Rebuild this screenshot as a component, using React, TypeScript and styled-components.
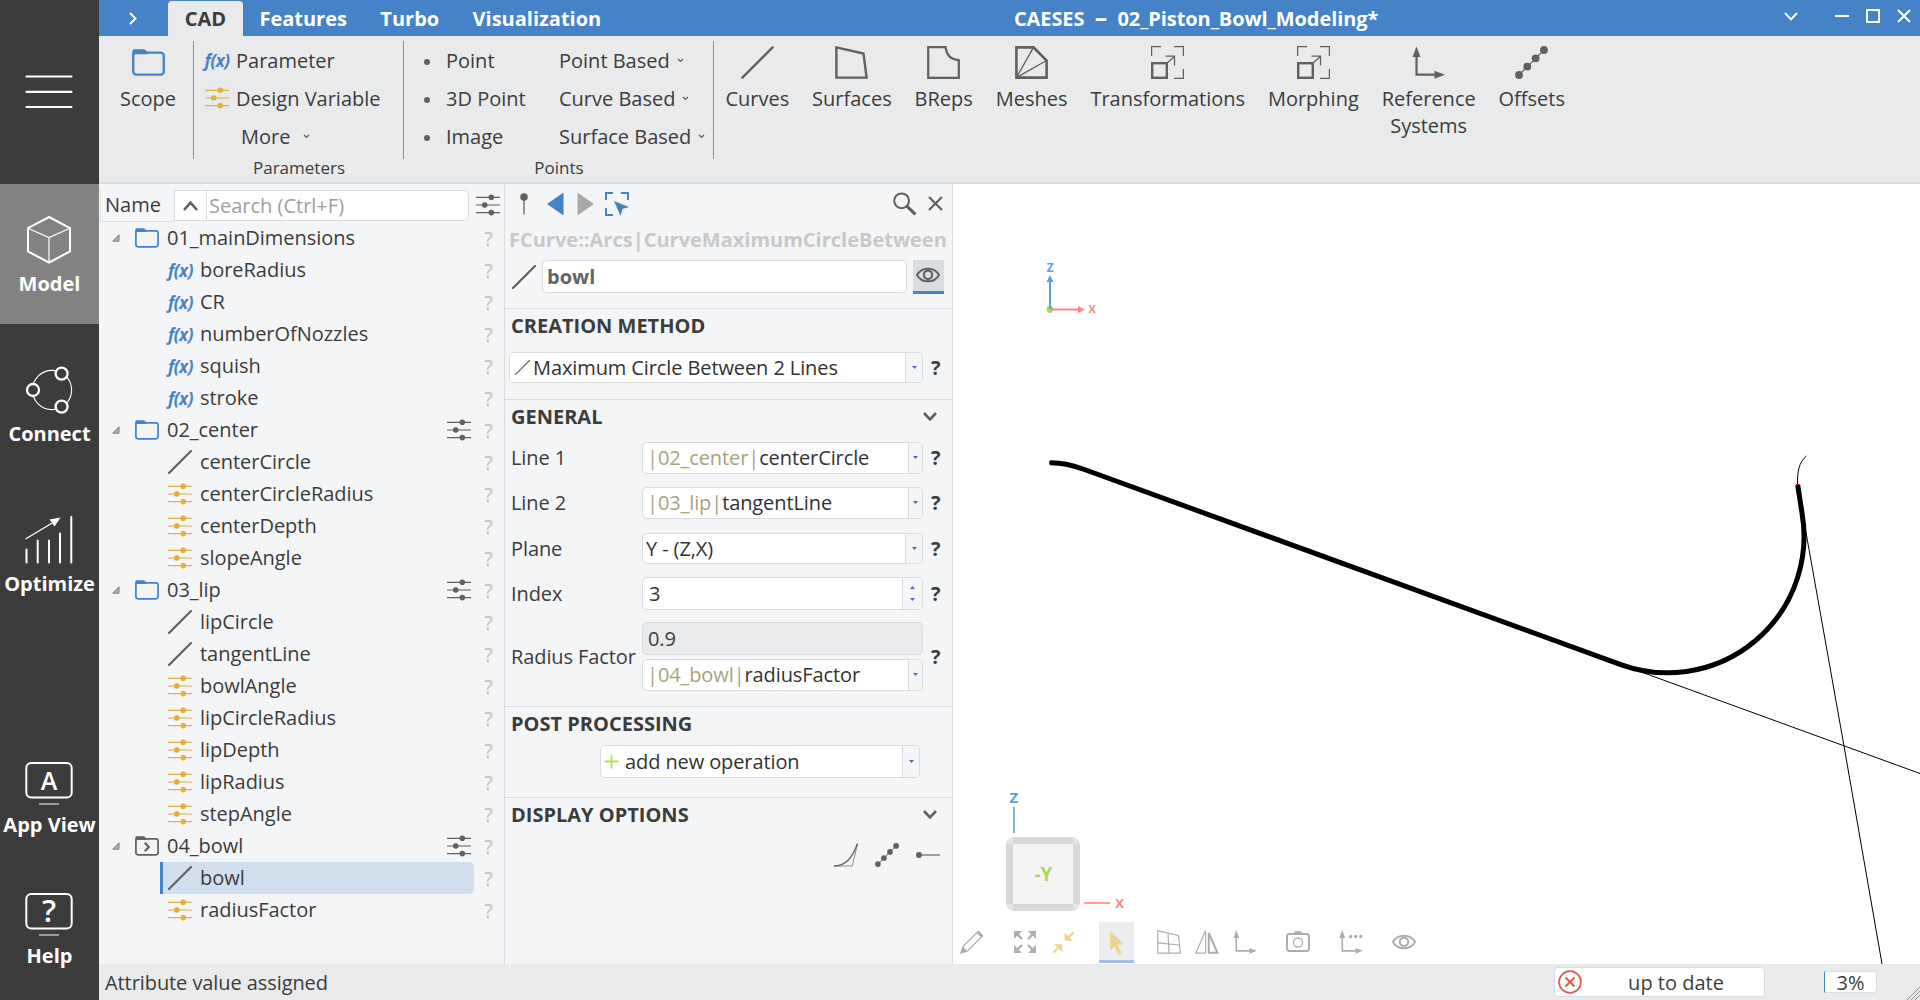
import React from "react";
import styled, { createGlobalStyle } from "styled-components";

const GlobalStyle = createGlobalStyle`
  * {
    box-sizing: border-box;
  }
  body {
    margin: 0;
    overflow: hidden;
    font-family: "Open Sans", "Noto Sans", sans-serif;
    font-size: 20px;
    line-height: 27px;
    color: #3c3c3c;
  }
  svg {
    display: block;
    flex-shrink: 0;
  }
  button {
    border: 0;
    padding: 0;
    background: none;
    font: inherit;
    color: inherit;
  }
`;

const Window = styled.div`
  display: flex;
  width: 1920px;
  height: 1000px;
  white-space: nowrap;
`;
const Main = styled.div`
  flex: 1;
  min-width: 0;
  display: flex;
  flex-direction: column;
`;

/* ---------- sidebar ---------- */

const Sidebar = styled.nav`
  width: 99px;
  background: #3c3c3c;
  color: #fff;
  display: flex;
  flex-direction: column;
  svg {
    margin-right: 1px;
  }
`;
const MenuButton = styled.button`
  height: 184px;
  display: flex;
  justify-content: center;
  align-items: center;
`;
interface SideItemProps {
  $active?: boolean;
  $height?: string;
}
const SideItem = styled.button<SideItemProps>`
  height: ${(props) => props.$height || "140px"};
  margin-bottom: ${(props) => (props.$height ? "0" : "10px")};
  padding-top: 32px;
  display: flex;
  flex-direction: column;
  align-items: center;
  gap: 6px;
  font-weight: 700;
  background: ${(props) => (props.$active ? "#828282" : "transparent")};
`;
const SideBottom = styled.div`
  margin-top: auto;
  padding-bottom: 13px;
  display: flex;
  flex-direction: column;
`;

/* ---------- title bar ---------- */

const TitleBar = styled.header`
  height: 36px;
  background: #4682c8;
  color: #fff;
  font-weight: 700;
  display: flex;
  align-items: flex-end;
`;
const Expand = styled.button`
  width: 69px;
  height: 36px;
  padding-right: 1px;
  display: flex;
  justify-content: center;
  align-items: center;
`;
const Tab = styled.button<{ $active?: boolean }>`
  height: 35px;
  padding: 0 16.7px;
  font-weight: 700;
  border-radius: 4px 4px 0 0;
  color: ${(props) => (props.$active ? "#3c3c3c" : "#fff")};
  background: ${(props) => (props.$active ? "#e9eaeb" : "transparent")};
`;
const Caption = styled.div`
  flex: 1;
  padding: 0 0 4px 396px;
  letter-spacing: -0.07px;
  white-space: pre;
`;
const Dash = styled.span`
  font-size: 25px;
  line-height: 0;
`;
const WindowButtons = styled.div`
  height: 36px;
  padding: 0 9px 4px 0;
  display: flex;
  align-items: center;
  gap: 17px;
  svg:first-child {
    margin-right: 20px;
  }
`;

/* ---------- ribbon ---------- */

const Ribbon = styled.div`
  height: 148px;
  background: #e9eaeb;
  border-bottom: 2px solid #dadde0;
  padding-top: 5px;
  display: flex;
`;
const RibbonGroup = styled.section<{ $width: string }>`
  width: ${(props) => props.$width};
  display: flex;
  flex-direction: column;
`;
const GroupBody = styled.div`
  height: 118px;
  border-right: 1px solid #909193;
  display: flex;
`;
const GroupLabel = styled.div`
  font-size: 17px;
  line-height: 17px;
  text-align: center;
`;
const CommandColumn = styled.div<{ $width?: string; $pad?: string }>`
  width: ${(props) => props.$width || "auto"};
  padding-left: ${(props) => props.$pad || "0"};
  display: flex;
  flex-direction: column;
`;
const Command = styled.button<{ $gap?: string; $indent?: string }>`
  height: 38px;
  padding-left: ${(props) => props.$indent || "0"};
  display: flex;
  align-items: center;
  gap: ${(props) => props.$gap || "7px"};
`;
const BigCommand = styled.button`
  padding: 5px 11.45px 0;
  display: flex;
  flex-direction: column;
  align-items: center;
  text-align: center;
  svg {
    margin-bottom: 6px;
  }
`;
const BigCommands = styled.div`
  display: flex;
  align-items: flex-start;
`;
const ScopeGroup = styled.div`
  width: 95px;
  height: 118px;
  border-right: 1px solid #909193;
  display: flex;
  justify-content: center;
  align-items: flex-start;
  padding-left: 4px;
  svg {
    margin-left: 1px;
  }
`;
const Dot = styled.span`
  width: 6px;
  height: 6px;
  margin-top: 4px;
  border-radius: 50%;
  background: #5f6061;
`;
const Fx = styled.span<{ $width?: string }>`
  width: ${(props) => props.$width || "26px"};
  color: #4682c8;
  font-size: 17px;
  font-style: italic;
  font-weight: 700;
  letter-spacing: -0.5px;
`;

/* ---------- object tree ---------- */

const Body = styled.div`
  height: 780px;
  display: flex;
`;
const TreePanel = styled.aside`
  width: 406px;
  background: #f4f5f7;
  border-right: 1px solid #d9dbde;
`;
const TreeHeader = styled.div`
  height: 38px;
  padding: 4px 4px 0 1px;
  display: flex;
`;
const HeaderCell = styled.div`
  width: 74px;
  height: 34px;
  padding: 3px 0 0 4px;
  border-left: 1px solid #dfe1e4;
  border-bottom: 1px solid #dfe1e4;
`;
const SearchUp = styled.button`
  width: 32px;
  height: 31px;
  margin-top: 2px;
  background: #fff;
  border: 1px solid #d9dbde;
  border-right: 0;
  display: flex;
  justify-content: center;
  align-items: center;
`;
const SearchInput = styled.input`
  width: 263px;
  height: 31px;
  margin-top: 2px;
  padding: 0 2px;
  border: 1px solid #d9dbde;
  border-radius: 0 5px 5px 0;
  font: inherit;
  &::placeholder {
    color: #a0a0a0;
    opacity: 1;
  }
`;
const HeaderSliders = styled.div`
  padding: 5px 0 0 7px;
`;
const TreeRow = styled.div`
  height: 32px;
  display: flex;
  align-items: center;
`;
const Twisty = styled.span`
  width: 36px;
  padding-left: 13px;
`;
interface NodeProps {
  $child?: boolean;
  $selected?: boolean;
}
const TreeNode = styled.div<NodeProps>`
  width: ${(props) => (props.$child ? "314px" : "312px")};
  height: 32px;
  margin-left: ${(props) => (props.$child ? "61px" : "0")};
  padding-left: ${(props) => (props.$child ? "5px" : "0")};
  border-left: ${(props) => (props.$child ? "3px solid transparent" : "0")};
  border-left-color: ${(props) => (props.$selected ? "#4682c8" : "transparent")};
  background: ${(props) => (props.$selected ? "#d1deee" : "transparent")};
  border-radius: 0 5px 5px 0;
  display: flex;
  align-items: center;
  gap: 8px;
`;
const NodeText = styled.span`
  padding-bottom: 1px;
  letter-spacing: -0.03px;
`;
const RowSliders = styled.span`
  width: 24px;
  margin-left: auto;
  margin-right: 13px;
`;
const RowHelp = styled.span<{ $tight?: boolean }>`
  margin-left: ${(props) => (props.$tight ? "0" : "auto")};
  margin-right: 11px;
  color: #c0c0c0;
`;

/* ---------- object editor ---------- */

const Editor = styled.section`
  width: 448px;
  background: #f4f5f7;
  border-right: 1px solid #d9dbde;
`;
const EditorTools = styled.div`
  height: 39px;
  padding: 0 9px 0 15px;
  display: flex;
  align-items: center;
`;
const ToolSlot = styled.span<{ $left?: string }>`
  margin-left: ${(props) => props.$left || "0"};
`;
const TypeName = styled.div`
  height: 36px;
  padding: 3px 0 0 4px;
  font-weight: 700;
  color: #c8c8c8;
  overflow: hidden;
`;
const NameRow = styled.div`
  height: 49px;
  padding: 1px 8px 0 7px;
  display: flex;
  align-items: flex-start;
  > svg {
    margin-top: 5px;
  }
`;
const NameInput = styled.input`
  width: 365px;
  height: 33px;
  margin: 0 6px;
  padding: 0 4px 1px;
  border: 1px solid #d9dbde;
  border-radius: 5px;
  font: inherit;
  font-weight: 700;
  color: #646464;
`;
const EyeButton = styled.button`
  width: 31px;
  height: 34px;
  padding: 0 1px 1px 0;
  background: #dadde0;
  border-bottom: 3px solid #4682c8;
  display: flex;
  justify-content: center;
  align-items: center;
`;
const Section = styled.section<{ $height?: string }>`
  height: ${(props) => props.$height || "auto"};
  border-top: 1px solid #d9dbde;
  padding: 3px 0 0 6px;
`;
const SectionTitle = styled.h2`
  height: 27px;
  margin: 0;
  padding-right: 15px;
  font-size: 20px;
  font-weight: 700;
  display: flex;
  align-items: center;
  justify-content: space-between;
`;
interface FieldProps {
  $height: string;
  $top?: string;
  $left?: string;
}
const Field = styled.div<FieldProps>`
  height: ${(props) => props.$height};
  margin-top: ${(props) => props.$top || "0"};
  margin-left: ${(props) => props.$left || "0"};
  display: flex;
  align-items: center;
  letter-spacing: -0.1px;
`;
const FieldLabel = styled.label`
  width: 131px;
`;
interface ComboProps {
  $width?: string;
  $height?: string;
  $pad?: string;
  $gap?: string;
}
const ComboBox = styled.div<ComboProps>`
  width: ${(props) => props.$width || "281px"};
  height: ${(props) => props.$height || "32px"};
  padding-left: ${(props) => props.$pad || "4px"};
  background: #fff;
  border: 1px solid #d9dbde;
  border-radius: 5px;
  overflow: hidden;
  display: flex;
  align-items: center;
  gap: ${(props) => props.$gap || "0"};
  color: #323232;
`;
const Drop = styled.span<{ $width: string }>`
  width: ${(props) => props.$width};
  height: 100%;
  margin-left: auto;
  background: #f4f5f7;
  border-left: 1px solid #d9dbde;
  display: flex;
  flex-direction: column;
  justify-content: space-evenly;
  align-items: center;
`;
const ReadOnly = styled.div`
  width: 281px;
  height: 33px;
  padding: 2px 5px;
  background: #e9eaeb;
  border: 1px solid #d9dbde;
  border-radius: 5px;
`;
const Stack = styled.div`
  display: flex;
  flex-direction: column;
  gap: 4px;
`;
const Scoped = styled.span`
  color: #a8a37c;
`;
const HelpMark = styled.b`
  margin-left: 8px;
`;
const DisplayIcons = styled.div`
  display: flex;
  justify-content: flex-end;
  gap: 17px;
  padding: 15px 12px 0 0;
`;

/* ---------- viewport ---------- */

const Viewport = styled.main`
  position: relative;
  width: 967px;
  height: 780px;
  background: #fff;
`;
const ViewTools = styled.div`
  position: absolute;
  left: 7px;
  bottom: 1px;
  height: 41px;
  display: flex;
  align-items: center;
  opacity: 0.5;
`;
const ViewTool = styled.button<{ $gap: number; $active?: boolean }>`
  height: 41px;
  padding: ${(props) => (props.$active ? "3px 5px 0" : "0 0 2px")};
  margin-left: ${(props) => props.$gap}px;
  border-bottom: ${(props) => (props.$active ? "3px solid #4682c8" : "0")};
  background: ${(props) => (props.$active ? "#dadde0" : "transparent")};
  display: flex;
  align-items: center;
`;

/* ---------- status bar ---------- */

const StatusBar = styled.footer`
  height: 36px;
  padding-left: 6px;
  background: #e9eaeb;
  display: flex;
  align-items: center;
`;
const StatusText = styled.span`
  letter-spacing: -0.08px;
  padding-top: 1px;
`;
const UpdateState = styled.div`
  width: 211px;
  height: 30px;
  margin-left: auto;
  margin-right: 59px;
  padding-left: 3px;
  background: #fff;
  border: 1px solid #dadde0;
  border-radius: 4px;
  display: flex;
  align-items: center;
  span {
    flex: 1;
    padding: 1px 0 0 6px;
    text-align: center;
  }
`;
const Progress = styled.div`
  width: 53px;
  height: 22px;
  margin-right: 43px;
  line-height: 21px;
  background: #fff;
  border: 1px solid #dadde0;
  border-left: 1px solid #4682c8;
  border-radius: 0 4px 4px 0;
  text-align: center;
`;
const ResizeGrip = styled.svg`
  align-self: flex-end;
  margin-left: -13px;
`;

/* ---------- icons ---------- */

const GREY = "#5f6061";

const FolderIcon = ({ size = 24, color = "#4682c8", current = false }) => (
  <svg width={size} height={size} viewBox="0 0 24 24" fill="none" stroke={color}>
    <rect x="0.9" y="4.8" width="22.2" height="16" rx="2.2" strokeWidth="1.7" />
    <path d="M0.2 7V4.2Q0.2 2.3 2 2.3H9L11.6 4.6V6H2Z" fill={color} stroke="none" />
    {current && <path d="M9.8 8.8L13.8 13L9.8 17.2" strokeWidth="2.2" />}
  </svg>
);

const SlidersIcon = ({ color = GREY }) => (
  <svg width="24" height="24" viewBox="0 0 24 24" stroke={color} fill={color}>
    <path d="M0 4.3H24M0 12H24M0 19.6H24" strokeWidth="1.2" />
    <g stroke="none">
      <circle cx="15.3" cy="4.3" r="2.8" />
      <circle cx="8.7" cy="12" r="2.8" />
      <circle cx="15.3" cy="19.6" r="2.8" />
    </g>
  </svg>
);

const LineIcon = ({ size = 24, width = 2.1 }) => (
  <svg width={size} height={size} viewBox="0 0 24 24" stroke={GREY} strokeWidth={width} strokeLinecap="round">
    <path d="M1 23L23 1" />
  </svg>
);

interface ChevronProps {
  w?: number;
  h?: number;
  color?: string;
  stroke?: number;
  up?: boolean;
}
const Chevron = ({ w = 14, h = 9, color = GREY, stroke = 2.6, up }: ChevronProps) => (
  <svg width={w} height={h} viewBox={`0 0 ${w} ${h}`} fill="none" stroke={color} strokeWidth={stroke}>
    <path d={up ? `M1 ${h - 1}L${w / 2} 1.6L${w - 1} ${h - 1}` : `M1 1L${w / 2} ${h - 1.6}L${w - 1} 1`} />
  </svg>
);
const TinyChevron = () => <Chevron w={7} h={5} stroke={1.3} />;

const Arrow = ({ up = false }) => (
  <svg width="5" height="3" viewBox="0 0 5 3" fill="#4f66bd">
    <path d={up ? "M0 3H5L2.5 0Z" : "M0 0H5L2.5 3Z"} />
  </svg>
);

const PolyIcon = ({ size = 33, width = 2.4 }) => (
  <svg width={size} height={size} viewBox="0 0 33 33" fill={GREY} stroke="none">
    <path d="M4 29L29 4" stroke={GREY} strokeWidth={width / 2} />
    <circle cx="4" cy="29" r="3.9" />
    <circle cx="12.3" cy="20.6" r="3.9" />
    <circle cx="20.6" cy="12.3" r="3.9" />
    <circle cx="29" cy="4" r="3.9" />
  </svg>
);

const ScaleIcon = () => (
  <svg width="33" height="33" viewBox="0 0 33 33" fill="none" stroke={GREY}>
    <rect x="1.2" y="17.2" width="14.6" height="14.6" strokeWidth="2.4" />
    <path d="M0.6 10V0.6H10M23 0.6H32.4V10M32.4 23V32.4H23" strokeWidth="1.2" />
    <path d="M16 17L23.4 10.4M14.5 10.2H23.5V19.5" strokeWidth="1.3" />
  </svg>
);

const AxesIcon = ({ size = 33, dots = false }) => (
  <svg width={size} height={size} viewBox="0 0 33 33" fill={GREY}>
    <path d="M0.5 11L4.5 0.5L8.5 11ZM22.5 24.7L33 28.7L22.5 32.7Z" />
    <path d="M4.5 8V28.7H24" fill="none" stroke={GREY} strokeWidth="2.2" />
    {dots && (
      <g>
        <circle cx="16" cy="9" r="2.3" />
        <circle cx="23" cy="9" r="2.3" />
        <circle cx="30" cy="9" r="2.3" />
      </g>
    )}
  </svg>
);

const EyeIcon = () => (
  <svg width="24" height="24" viewBox="0 0 24 24" fill="none" stroke={GREY} strokeWidth="1.9">
    <path d="M1 12C5.5 3.6 18.5 3.6 23 12C18.5 20.4 5.5 20.4 1 12Z" />
    <circle cx="12" cy="11.8" r="4.2" strokeWidth="2.1" />
  </svg>
);

const MonitorIcon = ({ letter }: { letter: string }) => (
  <svg width="48" height="48" viewBox="0 0 48 48" fill="none" stroke="#fff">
    <rect x="1.3" y="6" width="45.4" height="34.6" rx="5" strokeWidth="2" />
    <path d="M14 47H34" strokeWidth="1.6" stroke="#b4b4b4" />
    <text x="24" y={letter === "A" ? 32.5 : 34} fill="#fff" stroke="none" fontSize={letter === "A" ? 25 : 31} fontWeight="600" textAnchor="middle">
      {letter}
    </text>
  </svg>
);

/* ---------- data ---------- */

type NodeKind = "folder" | "current" | "fx" | "line" | "var";
interface TreeItem {
  kind: NodeKind;
  name: string;
  sliders?: boolean;
  selected?: boolean;
}

const tree: TreeItem[] = [
  { kind: "folder", name: "01_mainDimensions" },
  { kind: "fx", name: "boreRadius" },
  { kind: "fx", name: "CR" },
  { kind: "fx", name: "numberOfNozzles" },
  { kind: "fx", name: "squish" },
  { kind: "fx", name: "stroke" },
  { kind: "folder", name: "02_center", sliders: true },
  { kind: "line", name: "centerCircle" },
  { kind: "var", name: "centerCircleRadius" },
  { kind: "var", name: "centerDepth" },
  { kind: "var", name: "slopeAngle" },
  { kind: "folder", name: "03_lip", sliders: true },
  { kind: "line", name: "lipCircle" },
  { kind: "line", name: "tangentLine" },
  { kind: "var", name: "bowlAngle" },
  { kind: "var", name: "lipCircleRadius" },
  { kind: "var", name: "lipDepth" },
  { kind: "var", name: "lipRadius" },
  { kind: "var", name: "stepAngle" },
  { kind: "current", name: "04_bowl", sliders: true },
  { kind: "line", name: "bowl", selected: true },
  { kind: "var", name: "radiusFactor" },
];

const nodeIcons: Record<NodeKind, React.ReactNode> = {
  folder: <FolderIcon />,
  current: <FolderIcon color={GREY} current />,
  fx: <Fx $width="24px">f(x)</Fx>,
  line: <LineIcon />,
  var: <SlidersIcon color="#e0b040" />,
};

const Tree = () => (
  <TreePanel>
    <TreeHeader>
      <HeaderCell>Name</HeaderCell>
      <SearchUp>
        <Chevron up w={15} h={10} />
      </SearchUp>
      <SearchInput placeholder="Search (Ctrl+F)" />
      <HeaderSliders>
        <SlidersIcon />
      </HeaderSliders>
    </TreeHeader>
    {tree.map((item) => {
      const child = item.kind !== "folder" && item.kind !== "current";
      return (
        <TreeRow key={item.name}>
          {!child && (
            <Twisty>
              <svg width="8" height="8" viewBox="0 0 8 8">
                <path d="M7 0.8V7.2H0.8Z" fill="#b0b0b0" stroke="#808080" strokeWidth="1" />
              </svg>
            </Twisty>
          )}
          <TreeNode $child={child} $selected={item.selected}>
            {nodeIcons[item.kind]}
            <NodeText>{item.name}</NodeText>
          </TreeNode>
          {item.sliders && (
            <RowSliders>
              <SlidersIcon />
            </RowSliders>
          )}
          <RowHelp $tight={item.sliders}>?</RowHelp>
        </TreeRow>
      );
    })}
  </TreePanel>
);

const Ref = ({ scope, name }: { scope: string; name: string }) => (
  <ComboBox>
    <Scoped>|{scope}|</Scoped>
    {name}
    <Drop $width="14px">
      <Arrow />
    </Drop>
  </ComboBox>
);

const ObjectEditor = () => (
  <Editor>
    <EditorTools>
      <svg width="8" height="24" viewBox="0 0 8 24">
        <path d="M4 3V22.5" stroke="#8c8c8c" strokeWidth="1.8" />
        <circle cx="4" cy="5" r="3.8" fill={GREY} />
      </svg>
      <ToolSlot $left="19px">
        <svg width="17" height="24" viewBox="0 0 17 24">
          <path d="M0 12L16.5 0.5V23.5Z" fill="#4682c8" />
        </svg>
      </ToolSlot>
      <ToolSlot $left="13px">
        <svg width="17" height="24" viewBox="0 0 17 24">
          <path d="M17 12L0.5 0.5V23.5Z" fill="#a8a8a8" />
        </svg>
      </ToolSlot>
      <ToolSlot $left="11px">
        <svg width="24" height="24" viewBox="0 0 24 24">
          <path d="M1 8V1H8M16 1H23V8M1 16V23H8" fill="none" stroke="#4682c8" strokeWidth="2" />
          <path d="M9 9L24 15L17.5 17L15.5 24Z" fill="#4682c8" />
        </svg>
      </ToolSlot>
      <ToolSlot $left="auto">
        <svg width="24" height="24" viewBox="0 0 24 24" fill="none" stroke={GREY}>
          <circle cx="8.6" cy="8.8" r="7.4" strokeWidth="2" />
          <path d="M13.8 14.2L22.4 22.4" strokeWidth="3.2" />
        </svg>
      </ToolSlot>
      <ToolSlot $left="11px">
        <svg width="15" height="15" viewBox="0 0 15 15" stroke={GREY} strokeWidth="2.2">
          <path d="M1 1L14 14M14 1L1 14" />
        </svg>
      </ToolSlot>
    </EditorTools>
    <TypeName>FCurve::Arcs|CurveMaximumCircleBetween</TypeName>
    <NameRow>
      <LineIcon />
      <NameInput defaultValue="bowl" />
      <EyeButton>
        <EyeIcon />
      </EyeButton>
    </NameRow>

    <Section $height="91px">
      <SectionTitle>CREATION METHOD</SectionTitle>
      <Field $height="56px" $left="-2px">
        <ComboBox $width="414px" $height="31px" $pad="5px" $gap="3px">
          <LineIcon size={15} />
          Maximum Circle Between 2 Lines
          <Drop $width="17px">
            <Arrow />
          </Drop>
        </ComboBox>
        <HelpMark>?</HelpMark>
      </Field>
    </Section>

    <Section $height="307px">
      <SectionTitle>
        GENERAL
        <Chevron />
      </SectionTitle>
      <Field $height="45px" $top="5px">
        <FieldLabel>Line 1</FieldLabel>
        <Ref scope="02_center" name="centerCircle" />
        <HelpMark>?</HelpMark>
      </Field>
      <Field $height="45px">
        <FieldLabel>Line 2</FieldLabel>
        <Ref scope="03_lip" name="tangentLine" />
        <HelpMark>?</HelpMark>
      </Field>
      <Field $height="46px">
        <FieldLabel>Plane</FieldLabel>
        <ComboBox $height="31px" $pad="3px">
          Y - (Z,X)
          <Drop $width="17px">
            <Arrow />
          </Drop>
        </ComboBox>
        <HelpMark>?</HelpMark>
      </Field>
      <Field $height="45px">
        <FieldLabel>Index</FieldLabel>
        <ComboBox $height="33px" $pad="6px">
          3
          <Drop $width="20px">
            <Arrow up />
            <Arrow />
          </Drop>
        </ComboBox>
        <HelpMark>?</HelpMark>
      </Field>
      <Field $height="80px">
        <FieldLabel>Radius Factor</FieldLabel>
        <Stack>
          <ReadOnly>0.9</ReadOnly>
          <Ref scope="04_bowl" name="radiusFactor" />
        </Stack>
        <HelpMark>?</HelpMark>
      </Field>
    </Section>

    <Section $height="91px">
      <SectionTitle>POST PROCESSING</SectionTitle>
      <Field $height="49px" $left="89px">
        <ComboBox $width="320px" $height="33px" $pad="3px" $gap="6px">
          <svg width="15" height="15" viewBox="0 0 15 15" stroke="#b4e164" strokeWidth="1.8">
            <path d="M7.5 0.5V14.5M0.5 7.5H14.5" />
          </svg>
          add new operation
          <Drop $width="17px">
            <Arrow />
          </Drop>
        </ComboBox>
      </Field>
    </Section>

    <Section>
      <SectionTitle>
        DISPLAY OPTIONS
        <Chevron />
      </SectionTitle>
      <DisplayIcons>
        <svg width="24" height="24" viewBox="0 0 24 24" fill="none" stroke={GREY}>
          <path d="M0 23H18.3L23.5 0.5" strokeWidth="1" stroke="#8a8a8a" />
          <path d="M0 23C11 23 18 16 23.5 0.5" strokeWidth="1.3" />
        </svg>
        <PolyIcon size={24} />
        <svg width="24" height="24" viewBox="0 0 24 24">
          <path d="M3 12H24" stroke="#969696" strokeWidth="1.8" />
          <circle cx="3" cy="12" r="3" fill={GREY} />
        </svg>
      </DisplayIcons>
    </Section>
  </Editor>
);

const ExpandArrows = () => (
  <svg width="24" height="24" viewBox="0 0 24 24" fill={GREY} stroke={GREY} strokeWidth="2.4">
    <path d="M3 3L9 9M21 3L15 9M3 21L9 15M21 21L15 15" />
    <path stroke="none" d="M1 1H9L1 9ZM23 1V9L15 1ZM1 23V15L9 23ZM23 23H15L23 15Z" />
  </svg>
);

const View = () => (
  <Viewport>
    {/* scene in window coordinates */}
    <svg width="967" height="780" viewBox="953 184 967 780" fill="none" fontWeight="700">
      <g stroke="#000" strokeWidth="1">
        <path d="M1621.5 664.8L1920 773.5" />
        <path d="M1802 510L1844 746L1882 964" />
        <path d="M1806.5 456C1799 462 1797 472 1797.6 486" />
      </g>
      <path
        d="M1050 462.7C1063 462.5 1072 465 1083 469L1621.5 664.8A136.5 136.5 0 0 0 1802 513L1797.7 485"
        stroke="#000"
        strokeWidth="5"
      />
      <path d="M1049.5 461V464.5M1796 484.5H1799.5" stroke="#b01818" strokeWidth="1" />

      <circle cx="1050" cy="309.5" r="3.4" fill="#a8d65a" />
      <path d="M1050 309V279" stroke="#5aa5d7" strokeWidth="2" />
      <path d="M1050 275L1053.5 282H1046.5Z" fill="#5aa5d7" />
      <path d="M1051 309.5H1080" stroke="#ff8282" strokeWidth="2" />
      <path d="M1085 309.5L1078 306V313Z" fill="#ff8282" />
      <text x="1046.8" y="272" fontSize="12" fill="#5aa5d7">Z</text>
      <text x="1088.4" y="313.3" fontSize="11" fill="#ff8282">X</text>

      <text x="1009.6" y="803" fontSize="15" fill="#5aa5d7">Z</text>
      <path d="M1014 807V833" stroke="#5aa5d7" strokeWidth="1.6" />
      <rect x="1006" y="837" width="74" height="74" rx="8" fill="#e4e4e4" />
      <path d="M1013 837H1073V911H1013ZM1006 844H1080V904H1006Z" fill="#d8d8d8" />
      <rect x="1013" y="844" width="60" height="60" fill="#f4f4f4" />
      <text x="1043.5" y="880.5" fontSize="19" fill="#aad75f" textAnchor="middle">-Y</text>
      <path d="M1084 903H1110" stroke="#ff8282" strokeWidth="1.6" />
      <text x="1115.2" y="907.5" fontSize="13" fill="#ff8282">X</text>
    </svg>

    <ViewTools>
      <ViewTool $gap={0}>
        <svg width="24" height="24" viewBox="0 0 24 24" fill="none" stroke={GREY} strokeWidth="1.2">
          <path d="M1 23L3 16.5L18 1.5L22.5 6L7.5 21Z" />
          <path d="M0.5 23.5L2.8 16.5L7.5 21.2ZM16.6 2.8L18.6 0.8L23.2 5.4L21.2 7.4Z" fill={GREY} stroke="none" />
        </svg>
      </ViewTool>
      <ViewTool $gap={29}>
        <ExpandArrows />
      </ViewTool>
      <ViewTool $gap={15}>
        <svg width="24" height="24" viewBox="0 0 24 24" fill="#e0a828" stroke="#e0a828" strokeWidth="2.2">
          <path d="M1.5 22.5L8 16M21.5 2.5L15 9" />
          <path stroke="none" d="M2 14.2H10.2V22.4ZM12.6 2.6V10.8H20.8Z" />
        </svg>
      </ViewTool>
      <ViewTool $gap={23} $active>
        <svg width="25" height="24" viewBox="0 0 25 24" fill="#e0a828">
          <path d="M6 0L20 13.2L13.6 13.9L17.4 22L14 23.6L10.4 15.4L6 19.6Z" />
        </svg>
      </ViewTool>
      <ViewTool $gap={23}>
        <svg width="24" height="24" viewBox="0 0 24 24" fill="none" stroke={GREY} strokeWidth="1.2">
          <path d="M0.8 0.8L21.5 5.5L23.3 23.2H0.8ZM0.8 12.8L22.3 15M11 3.2L12 23.2" />
        </svg>
      </ViewTool>
      <ViewTool $gap={14}>
        <svg width="24" height="24" viewBox="0 0 24 24" fill="none" stroke={GREY} strokeWidth="1.2">
          <path d="M10.6 0.8V23.2H0.8Z" />
          <path d="M13.8 3V22.8H22.4Z" strokeWidth="2" />
        </svg>
      </ViewTool>
      <ViewTool $gap={14}>
        <AxesIcon size={24} />
      </ViewTool>
      <ViewTool $gap={29}>
        <svg width="24" height="24" viewBox="0 0 24 24" fill="none" stroke={GREY}>
          <rect x="1" y="4" width="22" height="17" rx="2.4" strokeWidth="2" />
          <path d="M8 3.5L9 1.8H15L16 3.5Z" fill={GREY} />
          <circle cx="12" cy="12.5" r="4.5" strokeWidth="1.3" />
        </svg>
      </ViewTool>
      <ViewTool $gap={29}>
        <AxesIcon size={24} dots />
      </ViewTool>
      <ViewTool $gap={29}>
        <EyeIcon />
      </ViewTool>
    </ViewTools>
  </Viewport>
);

const App: React.FC = () => {
  return (
    <>
      <GlobalStyle />
      <Window>
        <Sidebar>
          <MenuButton>
            <svg width="48" height="34" viewBox="0 0 48 34" stroke="#fff" strokeWidth="2.2" strokeLinecap="round">
              <path d="M1.5 1.5H46.5M1.5 16.8H46.5M1.5 32H46.5" />
            </svg>
          </MenuButton>
          <SideItem $active>
            <svg width="48" height="48" viewBox="0 0 48 48" fill="none" stroke="#fff" strokeWidth="2">
              <path d="M24 1L45 12.2V35.5L24 46.5L3 35.5V12.2Z" />
              <path d="M3.5 12.5L24 21.5L44.5 12.5M24 21.5V46" strokeWidth="1.2" />
            </svg>
            Model
          </SideItem>
          <SideItem>
            <svg width="48" height="48" viewBox="0 0 48 48" fill="#3c3c3c" stroke="#fff">
              <circle cx="27" cy="24" r="19.6" strokeWidth="1.1" />
              <g strokeWidth="2.3">
                <circle cx="8" cy="24" r="6" />
                <circle cx="36.6" cy="7.6" r="6" />
                <circle cx="36.6" cy="40.6" r="6" />
              </g>
            </svg>
            Connect
          </SideItem>
          <SideItem>
            <svg width="48" height="48" viewBox="0 0 48 48" fill="#fff" stroke="#fff">
              <path d="M1.5 46.5V33.5M12.7 46.5V24.5M24 46.5V24.5M35 46.5V17.5M46.3 46.5V1" strokeWidth="2" strokeLinecap="round" />
              <path d="M0.5 23L28 6.5" strokeWidth="1.3" />
              <path d="M35.5 1.5L29.5 10.5L24.5 3.5Z" stroke="none" />
            </svg>
            Optimize
          </SideItem>
          <SideBottom>
            <SideItem $height="131px">
              <MonitorIcon letter="A" />
              App View
            </SideItem>
            <SideItem $height="131px">
              <MonitorIcon letter="?" />
              Help
            </SideItem>
          </SideBottom>
        </Sidebar>

        <Main>
          <TitleBar>
            <Expand>
              <svg width="8" height="13" viewBox="0 0 8 13" fill="none" stroke="#fff" strokeWidth="2">
                <path d="M1 1L6.5 6.5L1 12" />
              </svg>
            </Expand>
            <Tab $active>CAD</Tab>
            <Tab>Features</Tab>
            <Tab>Turbo</Tab>
            <Tab>Visualization</Tab>
            <Caption>
              CAESES{"  "}
              <Dash>–</Dash>
              {"  "}02_Piston_Bowl_Modeling*
            </Caption>
            <WindowButtons>
              <Chevron color="#fff" stroke={2} />
              <svg width="14" height="14" viewBox="0 0 14 14" stroke="#fff" strokeWidth="2">
                <path d="M0 7H14" />
              </svg>
              <svg width="14" height="14" viewBox="0 0 14 14" fill="none" stroke="#fff" strokeWidth="2">
                <rect x="1" y="1" width="12" height="12" />
              </svg>
              <svg width="14" height="14" viewBox="0 0 14 14" stroke="#fff" strokeWidth="2">
                <path d="M1 1L13 13M13 1L1 13" />
              </svg>
            </WindowButtons>
          </TitleBar>

          <Ribbon>
            <ScopeGroup>
              <BigCommand>
                <FolderIcon size={33} />
                Scope
              </BigCommand>
            </ScopeGroup>
            <RibbonGroup $width="210px">
              <GroupBody>
                <CommandColumn $pad="10px">
                  <Command $gap="6px">
                    <Fx>f(x)</Fx>
                    Parameter
                  </Command>
                  <Command $indent="1px">
                    <SlidersIcon color="#e0b040" />
                    Design Variable
                  </Command>
                  <Command $indent="37px" $gap="13px">
                    More
                    <TinyChevron />
                  </Command>
                </CommandColumn>
              </GroupBody>
              <GroupLabel>Parameters</GroupLabel>
            </RibbonGroup>
            <RibbonGroup $width="310px">
              <GroupBody>
                <CommandColumn $pad="20px" $width="155px">
                  <Command $gap="16px">
                    <Dot />
                    Point
                  </Command>
                  <Command $gap="16px">
                    <Dot />
                    3D Point
                  </Command>
                  <Command $gap="16px">
                    <Dot />
                    Image
                  </Command>
                </CommandColumn>
                <CommandColumn>
                  <Command>
                    Point Based
                    <TinyChevron />
                  </Command>
                  <Command>
                    Curve Based
                    <TinyChevron />
                  </Command>
                  <Command>
                    Surface Based
                    <TinyChevron />
                  </Command>
                </CommandColumn>
              </GroupBody>
              <GroupLabel>Points</GroupLabel>
            </RibbonGroup>
            <BigCommands>
              <BigCommand>
                <LineIcon size={33} width={1.7} />
                Curves
              </BigCommand>
              <BigCommand>
                <svg width="33" height="33" viewBox="0 0 33 33" fill="none" stroke={GREY} strokeWidth="2.4">
                  <path d="M1.4 1.4L28.5 7.5L31.6 31.6H1.4Z" />
                </svg>
                Surfaces
              </BigCommand>
              <BigCommand>
                <svg width="33" height="33" viewBox="0 0 33 33" fill="none" stroke={GREY} strokeWidth="2.2">
                  <path d="M1.2 1.2H18.5C19.5 9 24 13.8 31.8 14.2V31.8H1.2Z" />
                </svg>
                BReps
              </BigCommand>
              <BigCommand>
                <svg width="33" height="33" viewBox="0 0 33 33" fill="none" stroke={GREY} strokeWidth="2.6">
                  <path d="M1.4 1.4H18.5L31.6 14.5V31.6H1.4Z" />
                  <path d="M1.4 31.6L18.5 1.4M1.4 31.6L31.6 14.5" strokeWidth="1.3" />
                </svg>
                Meshes
              </BigCommand>
              <BigCommand>
                <ScaleIcon />
                Transformations
              </BigCommand>
              <BigCommand>
                <ScaleIcon />
                Morphing
              </BigCommand>
              <BigCommand>
                <AxesIcon />
                Reference
                <br />
                Systems
              </BigCommand>
              <BigCommand>
                <PolyIcon />
                Offsets
              </BigCommand>
            </BigCommands>
          </Ribbon>

          <Body>
            <Tree />
            <ObjectEditor />
            <View />
          </Body>

          <StatusBar>
            <StatusText>Attribute value assigned</StatusText>
            <UpdateState>
              <svg width="24" height="24" viewBox="0 0 24 24" fill="none" stroke="#e05a4b" strokeWidth="2">
                <circle cx="12" cy="12" r="10.9" strokeWidth="1.7" />
                <path d="M7.5 7.5L16.5 16.5M16.5 7.5L7.5 16.5" />
              </svg>
              <span>up to date</span>
            </UpdateState>
            <Progress>3%</Progress>
            <ResizeGrip width="13" height="13" viewBox="0 0 13 13" stroke="#8c8c8c">
              <path d="M0 13L13 0M4 13L13 4M8 13L13 8" />
            </ResizeGrip>
          </StatusBar>
        </Main>
      </Window>
    </>
  );
};
export default App;
